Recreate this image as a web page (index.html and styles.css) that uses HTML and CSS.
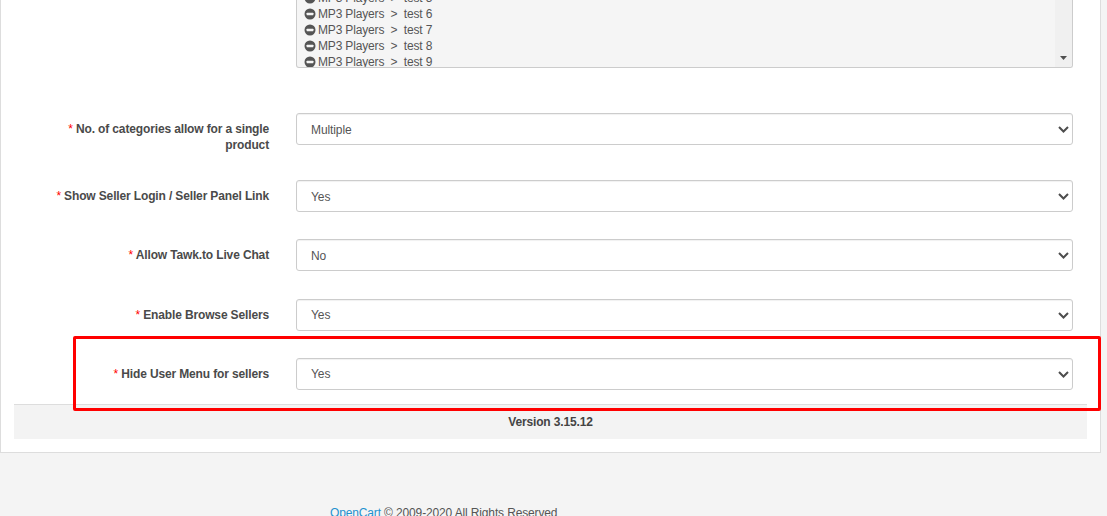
FILE: index.html
```html
<!DOCTYPE html>
<html lang="en">
<head>
<meta charset="utf-8">
<title>Seller settings</title>
<link rel="stylesheet" href="styles.css">
</head>
<body>
<div class="page">
  <main class="panel">
    <form class="form">
      <div class="row">
        <div class="label-cell"></div>
        <div class="listbox">
          <ul class="list">
            <li class="item"><svg class="minus" viewBox="0 0 12 12"><circle cx="6" cy="6" r="5.5"/><rect x="2.6" y="4.8" width="6.8" height="2.4" rx=".4"/></svg>MP3 Players&nbsp; &gt;&nbsp; test 5</li>
            <li class="item"><svg class="minus" viewBox="0 0 12 12"><circle cx="6" cy="6" r="5.5"/><rect x="2.6" y="4.8" width="6.8" height="2.4" rx=".4"/></svg>MP3 Players&nbsp; &gt;&nbsp; test 6</li>
            <li class="item"><svg class="minus" viewBox="0 0 12 12"><circle cx="6" cy="6" r="5.5"/><rect x="2.6" y="4.8" width="6.8" height="2.4" rx=".4"/></svg>MP3 Players&nbsp; &gt;&nbsp; test 7</li>
            <li class="item"><svg class="minus" viewBox="0 0 12 12"><circle cx="6" cy="6" r="5.5"/><rect x="2.6" y="4.8" width="6.8" height="2.4" rx=".4"/></svg>MP3 Players&nbsp; &gt;&nbsp; test 8</li>
            <li class="item"><svg class="minus" viewBox="0 0 12 12"><circle cx="6" cy="6" r="5.5"/><rect x="2.6" y="4.8" width="6.8" height="2.4" rx=".4"/></svg>MP3 Players&nbsp; &gt;&nbsp; test 9</li>
          </ul>
          <div class="scrollbar"><svg class="scroll-arrow" viewBox="0 0 7 4"><path d="M0 0H7L3.5 4Z"/></svg></div>
        </div>
      </div>
      <div class="fields">
        <div class="row">
          <label class="label"><span class="req">*</span> No. of categories allow for a single product</label>
          <div class="select-wrap">
            <select class="select"><option>Multiple</option></select>
            <svg class="chevron" viewBox="0 0 11 7"><path d="M1 1l4.5 4.5L10 1"/></svg>
          </div>
        </div>
        <div class="row">
          <label class="label"><span class="req">*</span> Show Seller Login / Seller Panel Link</label>
          <div class="select-wrap">
            <select class="select"><option>Yes</option></select>
            <svg class="chevron" viewBox="0 0 11 7"><path d="M1 1l4.5 4.5L10 1"/></svg>
          </div>
        </div>
        <div class="row">
          <label class="label"><span class="req">*</span> Allow Tawk.to Live Chat</label>
          <div class="select-wrap">
            <select class="select"><option>No</option></select>
            <svg class="chevron" viewBox="0 0 11 7"><path d="M1 1l4.5 4.5L10 1"/></svg>
          </div>
        </div>
        <div class="row">
          <label class="label"><span class="req">*</span> Enable Browse Sellers</label>
          <div class="select-wrap">
            <select class="select"><option>Yes</option></select>
            <svg class="chevron" viewBox="0 0 11 7"><path d="M1 1l4.5 4.5L10 1"/></svg>
          </div>
        </div>
        <div class="row">
          <label class="label"><span class="req">*</span> Hide User Menu for sellers</label>
          <div class="select-wrap">
            <select class="select"><option>Yes</option></select>
            <svg class="chevron" viewBox="0 0 11 7"><path d="M1 1l4.5 4.5L10 1"/></svg>
          </div>
        </div>
      </div>
    </form>
    <div class="version">Version 3.15.12</div>
  </main>
  <footer class="copyright"><a class="link" href="#">OpenCart</a> © 2009-2020 All Rights Reserved</footer>
  <div class="highlight"></div>
</div>
</body>
</html>
```

FILE: styles.css
```css
* {
  box-sizing: border-box;
}

html,
body {
  margin: 0;
  padding: 0;
}

body {
  background: #f4f4f4;
  color: #555;
  font-family: "Liberation Sans", Arial, sans-serif;
  font-size: 12px;
  line-height: 16px;
  letter-spacing: -0.14px;
}

.page {
  position: relative;
  width: 1107px;
  height: 516px;
  overflow: hidden;
}

.panel {
  width: 1101px;
  background: #fff;
  border: 1px solid #ddd;
  border-top: 0;
  padding: 0 13px 13px;
}

.row {
  display: grid;
  grid-template-columns: 255px 777px;
  column-gap: 27px;
  align-items: start;
}

.fields {
  display: flex;
  flex-direction: column;
  row-gap: 27.2px;
  margin-top: 45px;
}

.label {
  display: block;
  padding: 8px 0 0 20px;
  text-align: right;
  font-weight: 700;
  color: #4a4a4a;
}

.req {
  color: #f00;
  font-weight: 400;
}

.listbox {
  display: flex;
  height: 68px;
  overflow: hidden;
  background: #f5f5f5;
  border: 1px solid #ccc;
  border-top: 0;
  border-radius: 0 0 3px 3px;
}

.list {
  flex: 1;
  margin: -10px 0 0;
  padding: 0 0 0 7px;
  list-style: none;
  color: #555;
  letter-spacing: -0.16px;
}

.item {
  display: flex;
  align-items: center;
  height: 16px;
  white-space: pre;
}

.minus {
  width: 12px;
  height: 12px;
  margin-right: 2px;
  flex: none;
}

.minus circle {
  fill: #555;
}

.minus rect {
  fill: #f5f5f5;
}

.scrollbar {
  position: relative;
  flex: none;
  width: 17px;
  background: #f0f0f0;
}

.scroll-arrow {
  position: absolute;
  left: 5px;
  top: 56px;
  width: 7px;
  height: 4px;
}

.scroll-arrow path {
  fill: #505050;
}

.select-wrap {
  position: relative;
  height: 32px;
}

.select {
  display: block;
  width: 100%;
  height: 32px;
  padding: 1px 14px 0;
  appearance: none;
  background: #fff;
  border: 1px solid #ccc;
  border-radius: 3px;
  color: #555;
  font-family: inherit;
  font-size: 12px;
  letter-spacing: -0.1px;
  box-shadow: inset 0 1px 1px rgba(0, 0, 0, .06);
}

.chevron {
  position: absolute;
  right: 4px;
  top: 13px;
  width: 11px;
  height: 7px;
  pointer-events: none;
}

.chevron path {
  fill: none;
  stroke: #4d4d4d;
  stroke-width: 2;
}

.version {
  height: 35px;
  margin-top: 14.2px;
  padding-top: 9px;
  background: #f3f3f3;
  border-top: 1px solid #ddd;
  color: #444;
  font-weight: 700;
  text-align: center;
}

.copyright {
  margin-top: 52px;
  padding-left: 330px;
  color: #555;
}

.link {
  color: #1e91cf;
  text-decoration: none;
}

.highlight {
  position: absolute;
  left: 73px;
  top: 336px;
  width: 1028px;
  height: 75px;
  border: 3px solid #f00;
  border-radius: 2px;
  pointer-events: none;
}
```
